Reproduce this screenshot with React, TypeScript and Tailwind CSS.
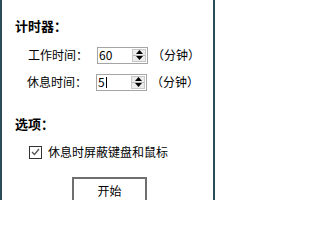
const font = { fontFamily: '"Noto Sans CJK SC", "Liberation Sans", sans-serif' };

function SpinField({ value, caret }: { value: string; caret?: boolean }) {
  return (
    <div className="flex h-[17px] w-[51px] items-stretch border border-[#a5a5a5] bg-white">
      <div className="flex flex-1 items-center pl-[1px] text-[12px] leading-none text-black">
        {value}
        {caret && <span className="ml-[1px] inline-block h-[11px] w-[1px] bg-black" />}
      </div>
      <div className="my-[1px] mr-[1px] flex w-[14px] flex-col border border-[#c8c8c8] bg-[#ececec]">
        <div className="flex flex-1 items-center justify-center border-b border-[#b8b8b8]">
          <svg width="7" height="4" viewBox="0 0 7 4">
            <path d="M3.5 0 L7 4 L0 4 Z" fill="#000" />
          </svg>
        </div>
        <div className="flex flex-1 items-center justify-center">
          <svg width="7" height="4" viewBox="0 0 7 4">
            <path d="M0 0 L7 0 L3.5 4 Z" fill="#000" />
          </svg>
        </div>
      </div>
    </div>
  );
}

function TimeRow({ label, value, caret }: { label: string; value: string; caret?: boolean }) {
  return (
    <div className="flex items-center">
      <span className="w-[69px] text-[12px] text-black">{label}</span>
      <SpinField value={value} caret={caret} />
      <span className="ml-[4px] text-[12px] text-black">（分钟）</span>
    </div>
  );
}

export default function App() {
  return (
    <div
      className="flex h-[200px] w-[215px] flex-col overflow-hidden border-x-2 border-[#2a4b57] bg-white"
      style={font}
    >
      <div className="pl-[13px] pt-[17px] text-[13px] font-bold leading-[18px] text-black">计时器：</div>
      <div className="mt-[11px] flex flex-col gap-[9px] pl-[26px]">
        <TimeRow label="工作时间：" value="60" />
        <div className="-ml-[1px]">
          <TimeRow label="休息时间：" value="5" caret />
        </div>
      </div>
      <div className="mt-[24px] pl-[13px] text-[13px] font-bold leading-[18px] text-black">选项：</div>
      <div className="mt-[10px] flex items-center pl-[27px]">
        <div className="flex h-[13px] w-[13px] items-center justify-center border border-[#333] bg-white">
          <svg width="9" height="8" viewBox="0 0 9 8">
            <path d="M1 4 L3.5 6.5 L8 1" fill="none" stroke="#555" strokeWidth="1.3" />
          </svg>
        </div>
        <span className="ml-[6px] text-[12px] text-black">休息时屏蔽键盘和鼠标</span>
      </div>
      <div className="mt-[16px] flex pl-[70px]">
        <div className="flex h-[30px] w-[75px] justify-center border-2 border-[#6f6f6f] bg-white pt-[3px] text-[12px] text-black">
          开始
        </div>
      </div>
    </div>
  );
}
